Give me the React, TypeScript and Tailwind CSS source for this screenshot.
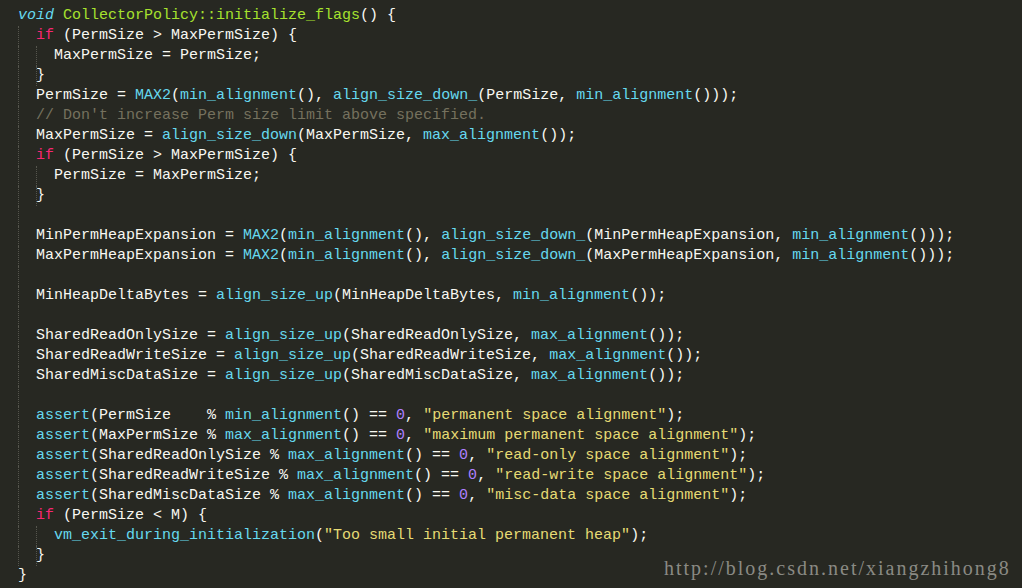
import React from "react";

type Tok = [string, string];

const D = "text-[#f8f8f2]";
const K = "text-[#f92672]";
const F = "text-[#66d9ef]";
const T = "text-[#66d9ef] italic";
const G = "text-[#a6e22e]";
const N = "text-[#ae81ff]";
const S = "text-[#e6db74]";
const C = "text-[#75715e]";

type Line = { ind: number; guides: number; brace?: boolean; toks: Tok[] };

const L = (ind: number, guides: number, toks: Tok[], brace = false): Line => ({ ind, guides, toks, brace });

const lines: Line[] = [
  L(0, 0, [[T, "void"], [D, " "], [G, "CollectorPolicy::initialize_flags"], [D, "() {"]]),
  L(1, 1, [[K, "if"], [D, " (PermSize > MaxPermSize) {"]]),
  L(2, 2, [[D, "MaxPermSize = PermSize;"]]),
  L(1, 1, [[D, "}"]], true),
  L(1, 1, [[D, "PermSize = "], [F, "MAX2"], [D, "("], [F, "min_alignment"], [D, "(), "], [F, "align_size_down_"], [D, "(PermSize, "], [F, "min_alignment"], [D, "()));"]]),
  L(1, 1, [[C, "// Don't increase Perm size limit above specified."]]),
  L(1, 1, [[D, "MaxPermSize = "], [F, "align_size_down"], [D, "(MaxPermSize, "], [F, "max_alignment"], [D, "());"]]),
  L(1, 1, [[K, "if"], [D, " (PermSize > MaxPermSize) {"]]),
  L(2, 2, [[D, "PermSize = MaxPermSize;"]]),
  L(1, 1, [[D, "}"]], true),
  L(0, 1, []),
  L(1, 1, [[D, "MinPermHeapExpansion = "], [F, "MAX2"], [D, "("], [F, "min_alignment"], [D, "(), "], [F, "align_size_down_"], [D, "(MinPermHeapExpansion, "], [F, "min_alignment"], [D, "()));"]]),
  L(1, 1, [[D, "MaxPermHeapExpansion = "], [F, "MAX2"], [D, "("], [F, "min_alignment"], [D, "(), "], [F, "align_size_down_"], [D, "(MaxPermHeapExpansion, "], [F, "min_alignment"], [D, "()));"]]),
  L(0, 1, []),
  L(1, 1, [[D, "MinHeapDeltaBytes = "], [F, "align_size_up"], [D, "(MinHeapDeltaBytes, "], [F, "min_alignment"], [D, "());"]]),
  L(0, 1, []),
  L(1, 1, [[D, "SharedReadOnlySize = "], [F, "align_size_up"], [D, "(SharedReadOnlySize, "], [F, "max_alignment"], [D, "());"]]),
  L(1, 1, [[D, "SharedReadWriteSize = "], [F, "align_size_up"], [D, "(SharedReadWriteSize, "], [F, "max_alignment"], [D, "());"]]),
  L(1, 1, [[D, "SharedMiscDataSize = "], [F, "align_size_up"], [D, "(SharedMiscDataSize, "], [F, "max_alignment"], [D, "());"]]),
  L(0, 1, []),
  L(1, 1, [[F, "assert"], [D, "(PermSize    % "], [F, "min_alignment"], [D, "() == "], [N, "0"], [D, ", "], [S, "\"permanent space alignment\""], [D, ");"]]),
  L(1, 1, [[F, "assert"], [D, "(MaxPermSize % "], [F, "max_alignment"], [D, "() == "], [N, "0"], [D, ", "], [S, "\"maximum permanent space alignment\""], [D, ");"]]),
  L(1, 1, [[F, "assert"], [D, "(SharedReadOnlySize % "], [F, "max_alignment"], [D, "() == "], [N, "0"], [D, ", "], [S, "\"read-only space alignment\""], [D, ");"]]),
  L(1, 1, [[F, "assert"], [D, "(SharedReadWriteSize % "], [F, "max_alignment"], [D, "() == "], [N, "0"], [D, ", "], [S, "\"read-write space alignment\""], [D, ");"]]),
  L(1, 1, [[F, "assert"], [D, "(SharedMiscDataSize % "], [F, "max_alignment"], [D, "() == "], [N, "0"], [D, ", "], [S, "\"misc-data space alignment\""], [D, ");"]]),
  L(1, 1, [[K, "if"], [D, " (PermSize < M) {"]]),
  L(2, 2, [[F, "vm_exit_during_initialization"], [D, "("], [S, "\"Too small initial permanent heap\""], [D, ");"]]),
  L(1, 1, [[D, "}"]], true),
  L(0, 0, [[D, "}"]]),
];

function Guide() {
  return <span className="inline-block h-[20px] w-[18px] align-top border-l border-dotted border-[#55554d]" />;
}

export default function App() {
  return (
    <div className="relative w-[1022px] h-[588px] overflow-hidden bg-[#272822]">
      <div
        className="pt-[6px] pl-[18px] text-[15px] leading-[20px]"
        style={{ fontFamily: '"Liberation Mono", "DejaVu Sans Mono", monospace' }}
      >
        {lines.map((ln, i) => {
          const pad = ln.ind - ln.guides;
          return (
            <div key={i} className="h-[20px] whitespace-pre flex items-start">
              {Array.from({ length: ln.guides }).map((_, j) => (
                <Guide key={j} />
              ))}
              {pad > 0 ? <span className="inline-block w-[18px]" /> : null}
              {ln.brace ? (
                <span className="inline-block h-[20px] w-px -mr-px border-l border-dotted border-[#55554d]" />
              ) : null}
              <span>
                {ln.toks.map((t, j) => (
                  <span key={j} className={t[0]}>
                    {t[1]}
                  </span>
                ))}
              </span>
            </div>
          );
        })}
      </div>
      <div
        className="absolute left-[664px] top-[556px] text-[20px] leading-[24px] text-[#8a8a84] tracking-[2px] whitespace-nowrap"
        style={{ fontFamily: '"Liberation Serif", "DejaVu Serif", serif' }}
      >
        http://blog.csdn.net/xiangzhihong8
      </div>
    </div>
  );
}
